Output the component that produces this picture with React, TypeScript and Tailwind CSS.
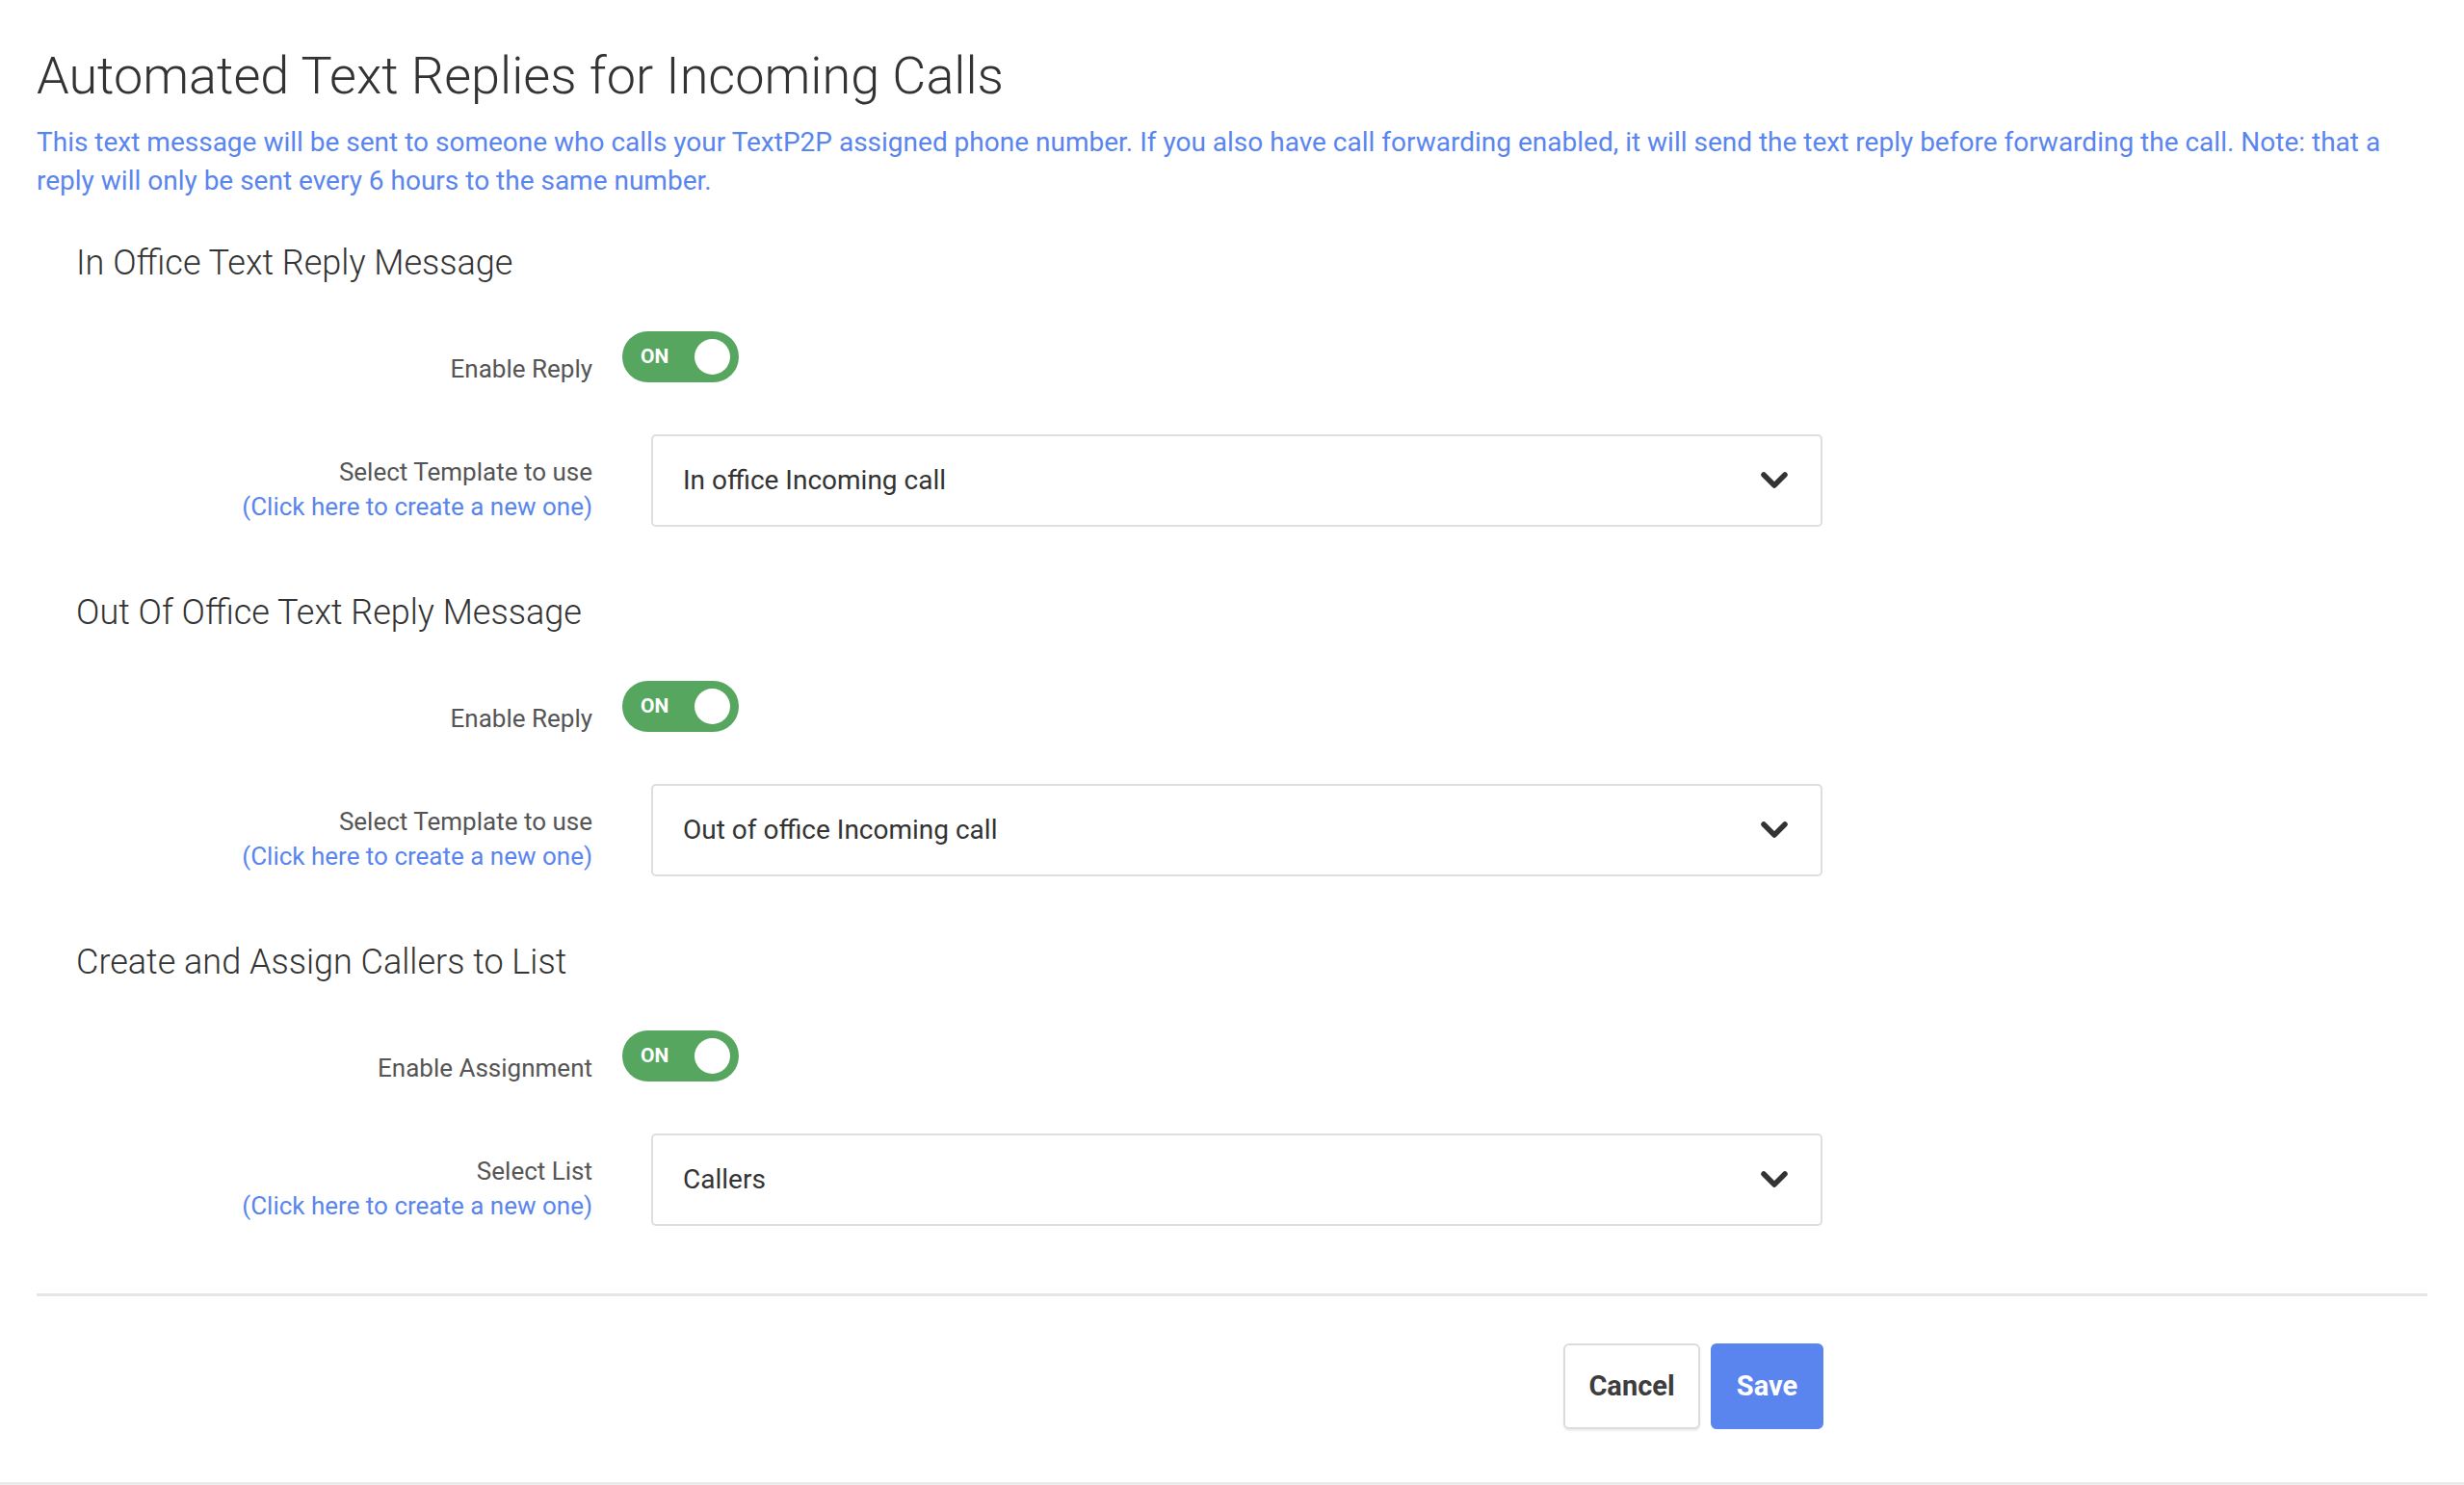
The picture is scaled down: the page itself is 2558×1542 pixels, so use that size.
import React, { useState } from "react";

type Section = {
  title: string;
  toggleLabel: string;
  selectLabel: string;
  value: string;
};

const sections: Section[] = [
  {
    title: "In Office Text Reply Message",
    toggleLabel: "Enable Reply",
    selectLabel: "Select Template to use",
    value: "In office Incoming call",
  },
  {
    title: "Out Of Office Text Reply Message",
    toggleLabel: "Enable Reply",
    selectLabel: "Select Template to use",
    value: "Out of office Incoming call",
  },
  {
    title: "Create and Assign Callers to List",
    toggleLabel: "Enable Assignment",
    selectLabel: "Select List",
    value: "Callers",
  },
];

function Toggle() {
  const [on, setOn] = useState(true);
  return (
    <button
      type="button"
      onClick={() => setOn(!on)}
      className={
        "flex items-center justify-between w-[121px] h-[53px] rounded-full px-[9px] " +
        (on ? "bg-[#57a65f]" : "bg-[#c9c9c9]")
      }
    >
      <span className="pl-[10px] text-[21px] font-bold text-white leading-none">{on ? "ON" : ""}</span>
      <span className="w-[37px] h-[37px] rounded-full bg-white" />
    </button>
  );
}

function Chevron() {
  return (
    <svg width="28" height="18" viewBox="0 0 28 18" fill="none">
      <polyline
        points="3,3 14,14 25,3"
        stroke="#333"
        strokeWidth="5.5"
        strokeLinecap="round"
        strokeLinejoin="round"
      />
    </svg>
  );
}

function ReplySection({ s }: { s: Section }) {
  return (
    <div>
      <h2 className="pl-[41px] text-[36px] font-light leading-[44px] text-[#333]">{s.title}</h2>

      <div className="flex items-start gap-[31px] mt-[49px]">
        <div className="w-[577px] pt-[21px] text-right text-[26px] leading-[36px] text-[#555]">
          {s.toggleLabel}
        </div>
        <Toggle />
      </div>

      <div className="flex items-start gap-[31px] mt-[50px]">
        <div className="w-[577px] pt-[21px] text-right text-[26px] leading-[36px] text-[#555]">
          <div>{s.selectLabel}</div>
          <a href="#" className="text-[#5a85ee]">(Click here to create a new one)</a>
        </div>
        <div className="ml-[30px] w-[1216px] h-[96px] flex items-center justify-between pl-[31px] pr-[34px] border-2 border-[#dedede] rounded-[5px] bg-white">
          <span className="text-[28px] text-[#333]">{s.value}</span>
          <Chevron />
        </div>
      </div>
    </div>
  );
}

export default function App() {
  return (
    <div
      className="h-[1542px] bg-white border-b-[3px] border-[#ebebeb] px-[38px] pt-[46px]"
      style={{ fontFamily: "Roboto, 'Liberation Sans', sans-serif" }}
    >
      <h1 className="text-[54px] font-light leading-[66px] text-[#333]">
        Automated Text Replies for Incoming Calls
      </h1>
      <p className="mt-[16px] pr-[10px] text-[28px] leading-[40px] text-[#5a85ee]">
        This text message will be sent to someone who calls your TextP2P assigned phone number. If you also
        have call forwarding enabled, it will send the text reply before forwarding the call. Note: that a reply
        will only be sent every 6 hours to the same number.
      </p>

      <div className="mt-[43px] flex flex-col gap-[67px]">
        {sections.map((s) => (
          <ReplySection key={s.title} s={s} />
        ))}
      </div>

      <div className="mt-[70px] border-t-[3px] border-[#e5e5e5]" />

      <div className="w-[1855px] mt-[49px] flex justify-end gap-[11px]">
        <button
          type="button"
          className="w-[142px] h-[89px] rounded-[6px] border-2 border-[#dcdcdc] bg-white shadow-[0_2px_2px_rgba(0,0,0,0.08)] text-[29px] font-bold text-[#3d3d3d]"
        >
          Cancel
        </button>
        <button
          type="button"
          className="w-[117px] h-[89px] rounded-[6px] bg-[#5a85ee] text-[29px] font-bold text-white"
        >
          Save
        </button>
      </div>
    </div>
  );
}
